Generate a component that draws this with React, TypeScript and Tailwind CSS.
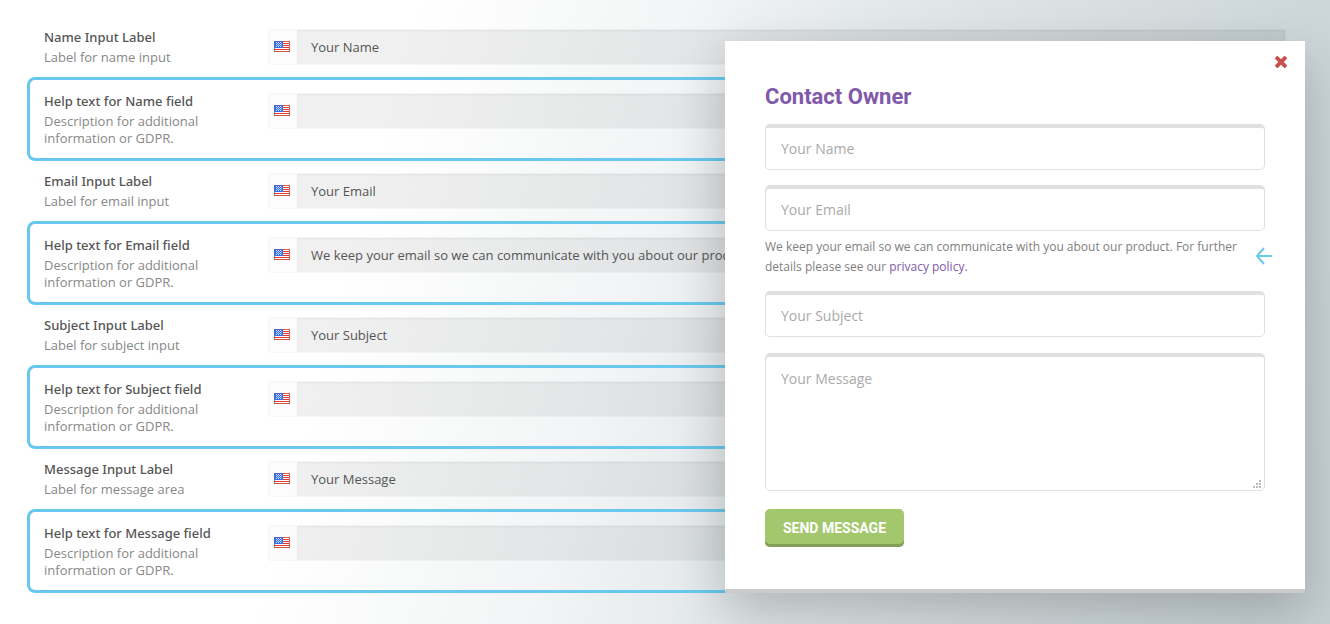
import { useState } from 'react';

interface Setting {
  id: string;
  title: string;
  description: string;
  value: string;
  highlighted: boolean;
}

const HELP_DESCRIPTION = 'Description for additional information or GDPR.';

const SETTINGS: Setting[] = [
  { id: 'name-label', title: 'Name Input Label', description: 'Label for name input', value: 'Your Name', highlighted: false },
  { id: 'name-help', title: 'Help text for Name field', description: HELP_DESCRIPTION, value: '', highlighted: true },
  { id: 'email-label', title: 'Email Input Label', description: 'Label for email input', value: 'Your Email', highlighted: false },
  {
    id: 'email-help',
    title: 'Help text for Email field',
    description: HELP_DESCRIPTION,
    value: 'We keep your email so we can communicate with you about our product. For further details please see our privacy policy.',
    highlighted: true,
  },
  { id: 'subject-label', title: 'Subject Input Label', description: 'Label for subject input', value: 'Your Subject', highlighted: false },
  { id: 'subject-help', title: 'Help text for Subject field', description: HELP_DESCRIPTION, value: '', highlighted: true },
  { id: 'message-label', title: 'Message Input Label', description: 'Label for message area', value: 'Your Message', highlighted: false },
  { id: 'message-help', title: 'Help text for Message field', description: HELP_DESCRIPTION, value: '', highlighted: true },
];

function FlagIcon() {
  return (
    <svg width="16" height="11" viewBox="0 0 16 11" shapeRendering="crispEdges" aria-hidden="true">
      <rect width="16" height="11" fill="#fff" />
      {[2, 4, 6, 8].map((y) => (
        <rect key={y} x="1" y={y} width="14" height="1" fill="#f0352f" />
      ))}
      <rect x="0" y="0" width="9" height="1" fill="#5a62c0" />
      <rect x="9" y="0" width="7" height="1" fill="#cf5a50" />
      <rect x="0" y="1" width="1" height="6" fill="#5a62c0" />
      <rect x="0" y="7" width="1" height="4" fill="#a8606c" />
      <rect x="15" y="1" width="1" height="10" fill="#c8695c" />
      <rect x="0" y="10" width="16" height="1" fill="#bd5a50" />
      <rect x="1" y="1" width="8" height="6" fill="#2a72f0" />
      {[1, 3, 5].map((y) =>
        [2, 4, 6].map((x) => <rect key={`${x}-${y}`} x={x} y={y} width="1" height="1" fill="#cfe0ff" />)
      )}
      {[2, 4].map((y) =>
        [3, 5, 7].map((x) => <rect key={`${x}-${y}`} x={x} y={y} width="1" height="1" fill="#a9c6fb" />)
      )}
    </svg>
  );
}

function SettingRow({ setting }: { setting: Setting }) {
  const [value, setValue] = useState(setting.value);

  return (
    <div
      className={
        setting.highlighted
          ? 'flex items-start rounded-lg border-[3px] border-[#69c8ee] px-[14px] pt-[13px] pb-[11px]'
          : 'flex items-start px-[17px] pt-3 pb-[11px]'
      }
    >
      <label htmlFor={setting.id} className="w-[224px] shrink-0 pr-10">
        <span className="block font-['Noto_Sans',sans-serif] text-[13px] leading-[17px] font-medium text-[#555]">
          {setting.title}
        </span>
        <span className="mt-[3px] block text-[13px] leading-[17px] text-[#888]">{setting.description}</span>
      </label>
      <div className="flex h-9 grow rounded-xs border border-black/3">
        <div className="flex w-7 shrink-0 bg-black/1 pt-[11px] pl-[5px]">
          <FlagIcon />
        </div>
        <input
          id={setting.id}
          type="text"
          value={value}
          onChange={(e) => setValue(e.target.value)}
          className="min-w-0 grow bg-black/6 px-[14px] pt-0.5 text-[13px] text-[#555] shadow-[inset_0_1px_3px_rgba(0,0,0,0.05)] outline-none"
        />
      </div>
    </div>
  );
}

const FIELD_CLASS =
  'block w-full rounded-[5px] border border-t-4 border-[#e0e0e0] bg-white px-[15px] text-sm text-[#555] placeholder:text-[#aaa] outline-none';

function ContactDialog() {
  return (
    <div
      role="dialog"
      aria-labelledby="contact-title"
      className="absolute top-[41px] right-[25px] w-[580px] border-b-4 border-[#cbcbcb] bg-white px-10 pt-10 pb-[42px] shadow-[0_20px_50px_rgba(0,0,0,0.22)]"
    >
      <button type="button" aria-label="Close" className="absolute top-[15px] right-[18px] text-[#c9504f]">
        <svg width="12" height="12" viewBox="302 366 1188 1188" fill="currentColor" className="block">
          <path d="M1490 1322q0 40-28 68l-136 136q-28 28-68 28t-68-28l-294-294-294 294q-28 28-68 28t-68-28l-136-136q-28-28-28-68t28-68l294-294-294-294q-28-28-28-68t28-68l136-136q28-28 68-28t68 28l294 294 294-294q28-28 68-28t68 28l136 136q28 28 28 68t-28 68l-294 294 294 294q28 28 28 68z" />
        </svg>
      </button>

      <h2 id="contact-title" className="mb-[11px] font-[Roboto,sans-serif] text-[22px] leading-8 font-bold text-[#8159ab]">
        Contact Owner
      </h2>

      <form onSubmit={(e) => e.preventDefault()}>
        <input type="text" aria-label="Your Name" placeholder="Your Name" className={`${FIELD_CLASS} mb-[15px] h-[46px]`} />

        <input type="email" aria-label="Your Email" placeholder="Your Email" className={`${FIELD_CLASS} h-[46px]`} />
        <div className="relative mt-[6px] mb-[14px]">
          <p className="pr-5 text-xs leading-5 text-[#808080]">
            We keep your email so we can communicate with you about our product. For further details please see our{' '}
            <a href="#" className="text-[#8159ab]">
              privacy policy.
            </a>
          </p>
          {/* Arrow pointing at the help text */}
          <svg
            width="18"
            height="18"
            viewBox="0 0 18 18"
            fill="none"
            stroke="#69c8ee"
            strokeWidth="2"
            className="absolute top-[10px] -right-2"
            aria-hidden="true"
          >
            <path d="M17 9H2M9 1L2 9L9 17" />
          </svg>
        </div>

        <input type="text" aria-label="Your Subject" placeholder="Your Subject" className={`${FIELD_CLASS} mb-4 h-[46px]`} />

        <div className="relative mb-[18px]">
          <textarea aria-label="Your Message" placeholder="Your Message" className={`${FIELD_CLASS} h-[138px] resize-none pt-3`} />
          <svg width="8" height="8" viewBox="0 0 8 8" fill="#bbb" shapeRendering="crispEdges" className="absolute right-[4px] bottom-[3px]" aria-hidden="true">
            <path d="M6 0h2v2H6zM3 3h2v2H3zM6 3h2v2H6zM0 6h2v2H0zM3 6h2v2H3zM6 6h2v2H6z" />
          </svg>
        </div>

        <button
          type="submit"
          className="block h-[38px] rounded-[5px] bg-[#a3c76d] px-[18px] font-[Roboto,sans-serif] text-sm font-bold text-white uppercase shadow-[inset_0_-3px_0_#83a156]"
        >
          Send Message
        </button>
      </form>
    </div>
  );
}

export default function App() {
  return (
    <main className="relative min-h-screen overflow-hidden bg-[linear-gradient(105deg,#fff_0%,#fff_28%,#f2f4f5_47%,#e4e9eb_58%,#d8dfe1_74%,#cdd6d9_88%,#c6d0d3_100%)] px-[27px] pt-[17px] pb-[31px] font-['Open_Sans',sans-serif]">
      {SETTINGS.map((setting) => (
        <SettingRow key={setting.id} setting={setting} />
      ))}
      <ContactDialog />
    </main>
  );
}
